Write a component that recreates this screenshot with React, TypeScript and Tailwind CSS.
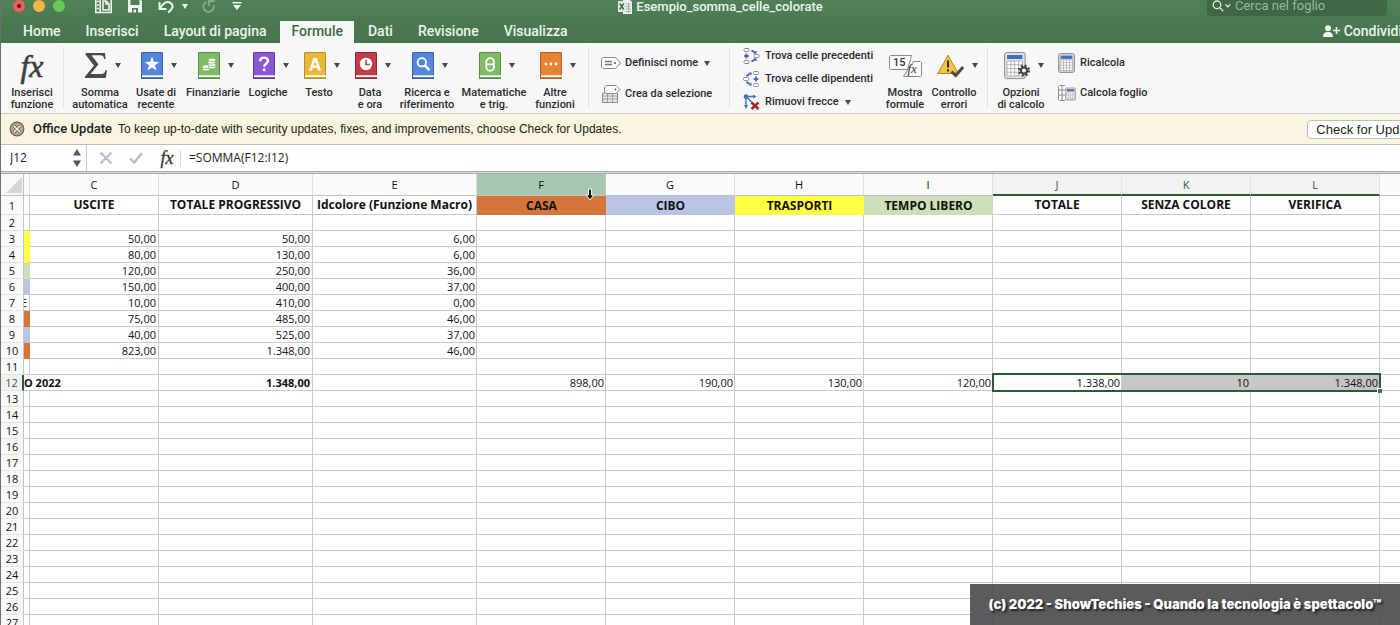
import { useState, type ReactNode } from "react";

const tabs = ["Home", "Inserisci", "Layout di pagina", "Formule", "Dati", "Revisione", "Visualizza"];

type Cell = { text?: string; className?: string };

const columns = [
  { name: "", width: "w-[6px]" },
  { name: "C", width: "w-[129px]" },
  { name: "D", width: "w-[154px]" },
  { name: "E", width: "w-[164px]" },
  { name: "F", width: "w-[129px]" },
  { name: "G", width: "w-[129px]" },
  { name: "H", width: "w-[129px]" },
  { name: "I", width: "w-[129px]" },
  { name: "J", width: "w-[129px]" },
  { name: "K", width: "w-[129px]" },
  { name: "L", width: "w-[129px]" },
  { name: "", width: "" },
];

const titles: Cell[] = [
  {},
  { text: "USCITE" },
  { text: "TOTALE PROGRESSIVO" },
  { text: "Idcolore (Funzione Macro)" },
  { text: "CASA", className: "bg-[#d4763c]" },
  { text: "CIBO", className: "bg-[#bac5e6]" },
  { text: "TRASPORTI", className: "bg-[#ffff43]" },
  { text: "TEMPO LIBERO", className: "bg-[#cbdfb8]" },
  { text: "TOTALE" },
  { text: "SENZA COLORE" },
  { text: "VERIFICA" },
  {},
];

// [colour of column B, uscite, totale progressivo, id colore]
const expenses: Record<number, string[]> = {
  3: ["bg-[#ffff43]", "50,00", "50,00", "6,00"],
  4: ["bg-[#ffff43]", "80,00", "130,00", "6,00"],
  5: ["bg-[#cbdfb8]", "120,00", "250,00", "36,00"],
  6: ["bg-[#bac5e6]", "150,00", "400,00", "37,00"],
  7: ["bg-white", "10,00", "410,00", "0,00"],
  8: ["bg-[#d4763c]", "75,00", "485,00", "46,00"],
  9: ["bg-[#bac5e6]", "40,00", "525,00", "37,00"],
  10: ["bg-[#d4763c]", "823,00", "1.348,00", "46,00"],
};

const totals = ["", "", "1.348,00", "", "898,00", "190,00", "130,00", "120,00", "1.338,00", "10", "1.348,00", ""];

const rowNumbers = Array.from({ length: 26 }, (_, i) => i + 2);

function Arrow({ className = "text-[#4a4a4a]" }: { className?: string }) {
  return (
    <svg viewBox="0 0 6 5" className={`h-[5px] w-[6px] shrink-0 ${className}`} fill="currentColor">
      <path d="M0 0h6L3 5z" />
    </svg>
  );
}

function Book({ fill, edge, children }: { fill: string; edge: string; children: ReactNode }) {
  return (
    <svg viewBox="0 0 22 27" className="h-[27px] w-[22px]">
      <rect x="0.5" y="0.5" width="21" height="26" rx="0.5" fill={fill} stroke={edge} />
      <path d="M1 24.2h21" stroke="#fff" strokeWidth="1.8" />
      <path d="M0 26.2h22" stroke={edge} strokeWidth="1.2" />
      {children}
    </svg>
  );
}

const books = [
  {
    label: ["Usate di", "recente"],
    width: "w-14",
    icon: (
      <Book fill="#5585dc" edge="#3b62a8">
        <path d="M11 4.8l1.9 5 5.300.2-4.200 3.300 1.500 5.200-4.500-3-4.500 3 1.500-5.200-4.200-3.300 5.300-.2z" fill="#fff" />
      </Book>
    ),
  },
  {
    label: ["Finanziarie"],
    width: "w-[58px]",
    icon: (
      <Book fill="#7fba66" edge="#578c42">
        <g fill="#fff" stroke="#7fba66" strokeWidth="0.8">
          <ellipse cx="8" cy="17" rx="3.7" ry="1.9" />
          <ellipse cx="8" cy="14.7" rx="3.7" ry="1.9" />
          <ellipse cx="14" cy="15" rx="3.7" ry="1.9" />
          <ellipse cx="14" cy="12.6" rx="3.7" ry="1.9" />
          <ellipse cx="13.5" cy="10.2" rx="3.7" ry="1.9" />
          <ellipse cx="14" cy="7.8" rx="3.7" ry="1.9" />
        </g>
      </Book>
    ),
  },
  {
    label: ["Logiche"],
    width: "w-[52px]",
    icon: (
      <Book fill="#8c57d0" edge="#633a99">
        <path d="M7.2 9.2c0-4.800 7.800-4.600 7.800-.4 0 2.800-3.800 2.700-3.800 5.900" fill="none" stroke="#fff" strokeWidth="2.4" />
        <circle cx="11.2" cy="17.8" r="1.5" fill="#fff" />
      </Book>
    ),
  },
  {
    label: ["Testo"],
    width: "w-[50px]",
    icon: (
      <Book fill="#e7b93c" edge="#b98f25">
        <path
          d="M9.500 6h3.200l4.400 12.500h-2.900l-.9-2.800H8.800l-.9 2.800H5zM11 9l-1.500 4.600h3.100z"
          fill="#fff"
          fillRule="evenodd"
        />
      </Book>
    ),
  },
  {
    label: ["Data", "e ora"],
    width: "w-[52px]",
    icon: (
      <Book fill="#c33d49" edge="#8d2932">
        <circle cx="11" cy="12" r="6.2" fill="#fff" />
        <path d="M11 8v4.5h3.8" fill="none" stroke="#c33d49" strokeWidth="1.6" />
      </Book>
    ),
  },
  {
    label: ["Ricerca e", "riferimento"],
    width: "w-[62px]",
    icon: (
      <Book fill="#5585dc" edge="#3b62a8">
        <circle cx="9.8" cy="10.3" r="4.2" fill="none" stroke="#fff" strokeWidth="1.8" />
        <path d="M12.8 13.4l4.600 4.8" stroke="#fff" strokeWidth="2.6" />
      </Book>
    ),
  },
  {
    label: ["Matematiche", "e trig."],
    width: "w-[72px]",
    icon: (
      <Book fill="#7fba66" edge="#578c42">
        <rect x="7.3" y="6.2" width="7.6" height="12.6" rx="3.8" fill="none" stroke="#fff" strokeWidth="1.8" />
        <path d="M7.3 12.4h7.6" stroke="#fff" strokeWidth="1.8" />
      </Book>
    ),
  },
  {
    label: ["Altre", "funzioni"],
    width: "w-[50px]",
    icon: (
      <Book fill="#e68334" edge="#b25f1e">
        <g fill="#fff">
          <circle cx="6" cy="12" r="1.4" />
          <circle cx="11" cy="12" r="1.4" />
          <circle cx="16" cy="12" r="1.4" />
        </g>
      </Book>
    ),
  },
];

function BigButton({ label, width, icon, menu }: { label: string[]; width: string; icon: ReactNode; menu?: boolean }) {
  return (
    <button className={`flex shrink-0 flex-col items-center pt-[9px] ${width}`}>
      <span className={`flex h-[27px] items-center gap-2 ${menu ? "pl-1.5" : ""}`}>
        {icon}
        {menu && <Arrow />}
      </span>
      <span className="mt-2 flex flex-col whitespace-nowrap leading-3">
        {label.map((line) => (
          <span key={line}>{line}</span>
        ))}
      </span>
    </button>
  );
}

function SmallButton({ label, icon, menu }: { label: string; icon: ReactNode; menu?: boolean }) {
  return (
    <button className="flex items-center whitespace-nowrap leading-4">
      {icon}
      {label}
      {menu && (
        <span className="ml-1.5">
          <Arrow />
        </span>
      )}
    </button>
  );
}

function Separator() {
  return <div className="mb-1 mt-1 w-px shrink-0 bg-[#e2e2e2]" />;
}

function Calculator({ className }: { className: string }) {
  return (
    <svg viewBox="0 0 17 20" className={className}>
      <rect x="0.6" y="0.6" width="15.8" height="18.8" rx="1.8" fill="#d9d9d9" stroke="#8a8a8a" />
      <rect x="2.6" y="2.6" width="11.8" height="3.2" fill="#3f6fc4" />
      <g fill="#fff" stroke="#8a8a8a" strokeWidth="0.5">
        <path d="M2.6 7h11.8v10.5H2.6zM5.5 7v10.5M8.5 7v10.5M11.5 7v10.5M2.6 9.6h11.8M2.6 12.2h11.8M2.6 14.8h11.8" />
      </g>
    </svg>
  );
}

function TitleBar() {
  return (
    <div className="h-[21px]">
      <div className="flex h-3 items-center text-[13px] font-medium text-[#eef4ee]">
        <div className="flex flex-1 items-center">
          <div className="ml-3 flex gap-2">
            <button aria-label="Chiudi" className="flex size-3 items-center justify-center rounded-full bg-[#ee5f5b]">
              <span className="size-1 rounded-full bg-[#5f1111]" />
            </button>
            <button aria-label="Riduci" className="size-3 rounded-full bg-[#f4b642]" />
            <button aria-label="Ingrandisci" className="size-3 rounded-full bg-[#68c953]" />
          </div>
          <button aria-label="Raccolta" className="ml-[30px]">
            <svg viewBox="0 0 17 16" className="h-4 w-[17px]" fill="none" stroke="currentColor" strokeWidth="1.6">
              <path d="M0.8 0v14.500h15.4V0M5.200 0v14.500M2 3.500h2M2 7h2M2 10.500h2M8 12V3h3l3 3v6zM11 3v3h3" />
            </svg>
          </button>
          <button aria-label="Salva" className="ml-4">
            <svg viewBox="0 0 14 14" className="size-3.5" fill="currentColor">
              <path d="M0 0h12l2 2v11.500H0zM2.500 0v6h9V0zM4 9v4.500h1.500V10.500h2.500v3H10V9z" fillRule="evenodd" />
            </svg>
          </button>
          <button aria-label="Annulla" className="ml-4 flex items-center gap-2">
            <svg viewBox="0 0 16 14" className="h-3.5 w-4" fill="none" stroke="currentColor" strokeWidth="2">
              <path d="M1.5 3v7h7M2 9.600C4.500 4 9 1.600 12.500 3.800S15 10.500 10 13.500" />
            </svg>
            <Arrow className="text-[#eef4ee]" />
          </button>
          <button aria-label="Ripeti" className="ml-3.5 text-[#86a98a]">
            <svg viewBox="0 0 14 14" className="size-3.5" fill="none" stroke="currentColor" strokeWidth="2">
              <path d="M4.500 2.800A5.200 5.200 0 1 0 11.500 6M7 7V2h5.500" />
            </svg>
          </button>
          <button aria-label="Personalizza" className="ml-4">
            <svg viewBox="0 0 10 8" className="h-2 w-2.5" fill="currentColor">
              <path d="M0.500 0h9v1.600h-9zM1 3h8L5 8z" />
            </svg>
          </button>
        </div>
        <div className="flex items-center gap-1 pt-0.5">
          <svg viewBox="0 0 14 14" className="size-3.5">
            <path d="M5 0h7l2 2v12H5z" fill="#eef4ee" />
            <path d="M7 4h6M7 6.500h6M7 9h6M7 11.500h6M10.500 3v10" stroke="#8aa58d" strokeWidth="0.700" />
            <path d="M0 1h7.500v11H0z" fill="#dfe9df" />
            <path d="M1.700 3.500l4 6M5.700 3.500l-4 6" stroke="#3f6b46" strokeWidth="1.500" />
          </svg>
          <h1>Esempio_somma_celle_colorate</h1>
        </div>
        <div className="flex flex-1 justify-end">
          <label className="mr-[53px] flex h-5 w-[180px] items-center rounded-b-sm bg-[#3f6645] pl-[5px]">
            <svg viewBox="0 0 20 12" className="h-3 w-5 shrink-0" fill="none" stroke="#dbe7dc" strokeWidth="1.300">
              <circle cx="5" cy="4.800" r="3.800" />
              <path d="M7.800 7.600l3.400 3.600M13.500 4.500l2.300 2.300 2.300-2.300" />
            </svg>
            <input
              aria-label="Cerca nel foglio"
              placeholder="Cerca nel foglio"
              className="ml-[3px] w-36 bg-transparent font-normal outline-none placeholder:text-[#9cb89f]"
            />
          </label>
        </div>
      </div>
    </div>
  );
}

function Ribbon() {
  return (
    <div className="flex h-[71px] border-b border-[#c9c9cd] bg-[#f7f7f7] text-[11px] font-medium text-[#2b2b2b]">
      <BigButton
        label={["Inserisci", "funzione"]}
        width="w-[62px]"
        icon={
          <span className="font-['Liberation_Serif'] text-[32px] font-normal italic leading-none text-[#3f3f3f] [-webkit-text-stroke:0.6px]">
            fx
          </span>
        }
      />
      <Separator />
      <div className="flex pl-2 pr-2">
        <BigButton
          label={["Somma", "automatica"]}
          width="w-14"
          menu
          icon={
            <svg viewBox="0 0 22 25" className="h-[25px] w-[22px]" fill="#4a4a4a">
              <path d="M0.500 0h19.500l.5 6h-1.300c-.5-2.800-1.500-3.700-4-3.700H6.500l7 9L5.500 21h10.500c3 0 4-1.200 4.700-4h1.300l-1.200 8H0v-1.500l9-10.700L0.500 1.500z" />
            </svg>
          }
        />
        {books.map((b) => (
          <BigButton key={b.label[0]} label={b.label} width={b.width} icon={b.icon} menu />
        ))}
      </div>
      <Separator />
      <div className="flex w-[140px] shrink-0 flex-col gap-3.5 pl-3 pt-3">
        <SmallButton
          label="Definisci nome"
          menu
          icon={
            <svg viewBox="0 0 20 12" className="mr-1 h-3 w-5" fill="#fff" stroke="#8a8a8a">
              <path d="M2 0.500h12.500l5 5.500-5 5.500H2L0.500 10V2z" />
              <path d="M4 4.500h7M4 7.500h7" stroke="#4d79c7" strokeWidth="1.300" />
              <circle cx="14" cy="6" r="1" fill="#555" stroke="none" />
            </svg>
          }
        />
        <SmallButton
          label="Crea da selezione"
          icon={
            <svg viewBox="0 0 20 18" className="mr-1 h-[18px] w-5" fill="#fff" stroke="#8a8a8a">
              <path d="M1.500 8h15v9.500h-15z" fill="#dbe6f6" />
              <path d="M1.500 11h15M1.500 14h15M6.500 8v9.500M11.500 8v9.500" strokeWidth="0.700" />
              <path d="M5 0.500h10l4 4-4 4H5L3.500 7V2z" />
              <circle cx="14.500" cy="4.500" r="0.900" fill="#555" stroke="none" />
            </svg>
          }
        />
      </div>
      <Separator />
      <div className="flex w-[153px] shrink-0 flex-col gap-[7px] pl-[13px] pt-[5px]">
        <SmallButton
          label="Trova celle precedenti"
          icon={
            <svg viewBox="0 0 17 16" className="mr-[5px] h-4 w-[17px]" fill="#fff" stroke="#8a8a8a">
              <rect x="1" y="0.500" width="5" height="3" rx="1" />
              <rect x="1" y="12.500" width="5" height="3" rx="1" />
              <rect x="11" y="6.500" width="5" height="3" rx="1" />
              <path d="M3.500 5.500v5M1 8h5M8.500 2.500l3.500 2M8.500 13.500l3.500-2" stroke="#2f5fb3" strokeWidth="1.700" />
              <path d="M10.500 5.500h3v-3zM10.500 10.500h3v3z" fill="#2f5fb3" stroke="none" />
            </svg>
          }
        />
        <SmallButton
          label="Trova celle dipendenti"
          icon={
            <svg viewBox="0 0 17 16" className="mr-[5px] h-4 w-[17px]" fill="#fff" stroke="#8a8a8a">
              <rect x="10.500" y="0.500" width="5" height="3" rx="1" />
              <rect x="10.500" y="12.500" width="5" height="3" rx="1" />
              <rect x="0.500" y="6.500" width="5" height="3" rx="1" />
              <path d="M13 5.500v5M10.500 8h5M3.500 5l3-2M3.500 11l3 2" stroke="#2f5fb3" strokeWidth="1.700" />
              <path d="M5.500 1.500h3v3zM5.500 14.500h3v-3z" fill="#2f5fb3" stroke="none" />
            </svg>
          }
        />
        <SmallButton
          label="Rimuovi frecce"
          menu
          icon={
            <svg viewBox="0 0 17 16" className="mr-[5px] h-4 w-[17px]" fill="none" stroke="#3f6fb5">
              <path d="M3 2.500h8M3 2.500v9M3.500 3l6 6" strokeWidth="1.300" />
              <path d="M10 0.500l3.500 2-3.500 2zM1 11h4l-2 4z" fill="#3f6fb5" stroke="none" />
              <circle cx="3" cy="2.500" r="2.300" fill="#3f6fb5" stroke="none" />
              <path d="M8.500 8.500l7 6.500M15.500 8.500l-7 6.500" stroke="#a3262e" strokeWidth="2.400" />
            </svg>
          }
        />
      </div>
      <BigButton
        label={["Mostra", "formule"]}
        width="w-11"
        icon={
          <svg viewBox="0 0 33 24" className="h-6 w-[33px] shrink-0" fill="#fafafa" stroke="#8a8a8a">
            <path d="M1.500 1.500h21l-4 14h-17l-1-1v-12zM24.500 7.500h7l1 1v13l-1 1h-17z" />
            <text x="4" y="12" fontSize="11" fill="#333" stroke="none">15</text>
            <text x="18.500" y="19" fontSize="13" fontStyle="italic" fill="#333" stroke="none" className="font-['Liberation_Serif']">
              fx
            </text>
          </svg>
        }
      />
      <BigButton
        label={["Controllo", "errori"]}
        width="w-[54px]"
        menu
        icon={
          <svg viewBox="0 0 27 24" className="h-6 w-[27px]">
            <path d="M11 1.200L21.300 19.500H0.800z" fill="#f3c33f" stroke="#b58a1c" strokeLinejoin="round" />
            <path d="M11 6.500v7M11 15.200v2.300" stroke="#333" strokeWidth="2" />
            <path d="M14.500 17.500l4.200 4 7.500-8.500" fill="none" stroke="#484848" strokeWidth="3" />
          </svg>
        }
      />
      <div className="w-1.5 shrink-0" />
      <Separator />
      <BigButton
        label={["Opzioni", "di calcolo"]}
        width="w-[66px]"
        menu
        icon={
          <svg viewBox="0 0 26 28" className="h-7 w-[26px]">
            <rect x="0.600" y="0.600" width="20.500" height="26" rx="2" fill="#e4e4e4" stroke="#8a8a8a" />
            <rect x="3" y="3" width="15.500" height="4" fill="#3f6fc4" />
            <path
              d="M3 9h15.500v15H3zM6.900 9v15M10.700 9v15M14.600 9v15M3 12.700h15.500M3 16.500h15.500M3 20.200h15.500"
              fill="#fff"
              stroke="#999"
              strokeWidth="0.700"
            />
            <circle cx="20" cy="18.500" r="5" fill="none" stroke="#444" strokeWidth="2.200" strokeDasharray="2 1.930" />
            <circle cx="20" cy="18.500" r="3.200" fill="#f0f0f0" stroke="#444" strokeWidth="2.200" />
          </svg>
        }
      />
      <div className="flex flex-col gap-3 pl-1 pt-2.5">
        <SmallButton label="Ricalcola" icon={<Calculator className="mr-[5px] h-5 w-[17px]" />} />
        <SmallButton
          label="Calcola foglio"
          icon={
            <span className="mr-1 flex items-start">
              <svg viewBox="0 0 7 16" className="h-4 w-[7px]" fill="#fff" stroke="#8a8a8a">
                <path d="M7 0.500H1.500l-1 1v13l1 1H7M0.500 5H7M0.500 10H7M4 0.500v15" />
              </svg>
              <Calculator className="mt-0.5 h-3.5 w-[11px]" />
            </span>
          }
        />
      </div>
    </div>
  );
}

function UpdateBar() {
  return (
    <div className="flex h-[31px] items-center border-b border-[#c0c0b0] bg-[#f8f4df] pl-2 pr-[7px] text-[13px] text-[#1c1c1c]">
      <button aria-label="Chiudi avviso">
        <svg viewBox="0 0 16 16" className="size-4">
          <circle cx="8" cy="8" r="6.800" fill="#b8a98c" stroke="#6e5f47" strokeWidth="1.200" />
          <path d="M5 5l6 6M11 5l-6 6" stroke="#5b4c36" strokeWidth="3" />
          <path d="M5 5l6 6M11 5l-6 6" stroke="#fff" strokeWidth="1.500" />
        </svg>
      </button>
      <span className="ml-2 font-medium">Office Update</span>
      <span className="ml-1.5 font-['Liberation_Sans',sans-serif] text-xs">
        To keep up-to-date with security updates, fixes, and improvements, choose Check for Updates.
      </span>
      <button className="ml-auto h-[19px] rounded-sm border border-[#bcbcc4] bg-white px-2 font-['Liberation_Sans',sans-serif] leading-none">
        Check for Updates
      </button>
    </div>
  );
}

function FormulaBar({ formula, onChange }: { formula: string; onChange: (v: string) => void }) {
  return (
    <div className="flex h-[26px] items-center bg-white font-['Open_Sans',sans-serif] text-xs text-[#222]">
      <input aria-label="Casella nome" defaultValue="J12" className="w-14 pl-[9px] outline-none" />
      <svg viewBox="0 0 8 18" className="ml-4 h-[18px] w-2" fill="#555">
        <path d="M4 0l4 6.500H0zM4 18l4-6.500H0z" />
      </svg>
      <div className="ml-[5px] h-full w-px bg-[#cfcfcf]" />
      <button aria-label="Annulla" className="ml-3">
        <svg viewBox="0 0 14 14" className="size-3.5" stroke="#bdbdbd" strokeWidth="2.200">
          <path d="M1.500 1.500l11 11M12.500 1.500l-11 11" />
        </svg>
      </button>
      <button aria-label="Conferma" className="ml-4">
        <svg viewBox="0 0 14 12" className="h-3 w-3.5" fill="none" stroke="#bdbdbd" strokeWidth="2.400">
          <path d="M1 6.500l4.200 4L13 1" />
        </svg>
      </button>
      <button className="ml-4 w-4 font-['Liberation_Serif'] text-lg italic leading-none text-[#333] [-webkit-text-stroke:0.3px]">fx</button>
      <div className="ml-[5px] h-4 w-px bg-[#d6d6d6]" />
      <input
        aria-label="Formula"
        value={formula}
        onChange={(e) => onChange(e.target.value)}
        className="ml-2 flex-1 outline-none"
      />
    </div>
  );
}

function Sheet() {
  const grid = "border-b border-r border-[#cacaca]";

  return (
    <table className="w-full table-fixed border-separate border-spacing-0 bg-white font-['Open_Sans',sans-serif] text-[11px] leading-[15px] text-[#111]">
      <colgroup>
        <col className="w-[23px]" />
        {columns.map((c, i) => (
          <col key={i} className={c.width} />
        ))}
      </colgroup>
      <thead>
        <tr className="h-[22px]">
          <th className="border-b border-r border-[#c2c2c2] bg-[#f8f8f8] p-0">
            <svg viewBox="0 0 16 16" className="ml-[5px] size-4" fill="#d6d6d6">
              <path d="M16 0v16H0z" />
            </svg>
          </th>
          {columns.map((c, i) => {
            const selected = i >= 8 && i <= 10;
            return (
              <th
                key={i}
                className={`relative border-r p-0 font-normal ${
                  selected
                    ? "border-b-2 border-b-[#2f5a36] border-r-[#e2e2e2] bg-[#f2f2f2] text-[#2f5a36]"
                    : c.name === "F"
                      ? "border-b border-[#c2c2c2] bg-[#a5c8b0]"
                      : "border-b border-b-[#c2c2c2] border-r-[#dedede] bg-[#fafafa]"
                }`}
              >
                {c.name}
                {c.name === "F" && (
                  <svg viewBox="0 0 10 13" className="absolute -bottom-1.5 right-2.5 z-10 h-[13px] w-2.5">
                    <path d="M3.500 1h3v6h2.300L5 12 1.200 7h2.300z" fill="#111" stroke="#fff" strokeWidth="1" />
                  </svg>
                )}
              </th>
            );
          })}
        </tr>
      </thead>
      <tbody>
        <tr className="h-[19px]">
          <th className="border-b border-r border-b-[#e4e4e4] border-r-[#c2c2c2] bg-[#fafafa] p-0 font-normal">1</th>
          {titles.map((t, i) => (
            <td
              key={i}
              className={`overflow-hidden whitespace-nowrap p-0 text-center text-xs font-bold leading-[18px] ${t.className ?? grid}`}
            >
              {t.text}
            </td>
          ))}
        </tr>
        {rowNumbers.map((n) => {
          const expense = expenses[n];
          const active = n === 12;
          return (
            <tr key={n} className="h-4">
              <th
                className={`border-b border-b-[#e4e4e4] p-0 font-normal ${
                  active ? "border-r-2 border-r-[#2f5a36] bg-[#f2f2f2] text-[#2f5a36]" : "border-r border-r-[#c2c2c2] bg-[#fafafa]"
                }`}
              >
                {n}
              </th>
              {columns.map((c, i) => {
                if (i === 0) {
                  return (
                    <td key={i} className={`p-0 ${active ? "border-b border-[#cacaca]" : expense && n !== 7 ? expense[0] : grid}`}>
                      {n === 7 && <div className="flex w-[3px] justify-end overflow-hidden">E</div>}
                      {active && <div className="w-0 whitespace-nowrap font-bold">O 2022</div>}
                    </td>
                  );
                }
                const text = active ? totals[i] : i < 4 && expense ? expense[i] : "";
                return (
                  <td
                    key={i}
                    className={`relative whitespace-nowrap py-0 pl-0 text-right ${i < 3 ? "pr-0.5" : "pr-px"} ${grid} ${
                      active && i === 2 ? "font-bold" : ""
                    } ${active && (i === 9 || i === 10) ? "bg-[#c6c6c6]" : ""}`}
                  >
                    {text}
                    {active && c.name === "J" && (
                      <div className="absolute -left-px -top-0.5 z-10 h-[19px] w-[389px] border-2 border-[#2f5a36]">
                        <span className="absolute -bottom-[3px] -right-[3px] size-[5px] border-l border-t border-white bg-[#3f7a48]" />
                      </div>
                    )}
                  </td>
                );
              })}
            </tr>
          );
        })}
      </tbody>
    </table>
  );
}

export default function App() {
  const [tab, setTab] = useState("Formule");
  const [formula, setFormula] = useState("=SOMMA(F12:I12)");

  return (
    <div className="relative h-screen overflow-hidden bg-white font-['Roboto',sans-serif]">
      <div className="w-[calc(100%+40px)] border-l border-[#6f6f6f]">
        <header className="bg-linear-to-b from-[#4f8057] to-[#47744d]">
          <TitleBar />
          <nav className="flex h-[22px] items-stretch gap-[3px] pl-[11px] text-sm font-medium text-[#eef4ee]">
            {tabs.map((t) => (
              <button
                key={t}
                onClick={() => setTab(t)}
                className={`px-[11px] pb-0.5 leading-5 ${tab === t ? "bg-[#f7f7f7] text-[#3d6b45]" : ""}`}
              >
                {t}
              </button>
            ))}
            <button className="ml-auto flex items-center gap-1 pb-0.5 pr-[38px] leading-5">
              <svg viewBox="0 0 17 12" className="h-3 w-[17px]" fill="currentColor">
                <circle cx="5" cy="3.200" r="3" />
                <path d="M0 12c0-3.500 1.500-5 5-5s5 1.500 5 5zM12.700 2h1.600v2.700H17v1.600h-2.700V9h-1.600V6.300H10V4.700h2.700z" />
              </svg>
              Condividi
            </button>
          </nav>
        </header>
        <Ribbon />
        <UpdateBar />
        <FormulaBar formula={formula} onChange={setFormula} />
        <div className="h-[3px] border-y border-[#a8a8a8] bg-[#dcdcdc]" />
        <Sheet />
      </div>
      <footer className="absolute bottom-0 right-0 flex h-[41px] w-[430px] items-center justify-center bg-[#4a4a4a]/90 font-['Inter',sans-serif] text-[13px] font-black text-white [text-shadow:2px_2px_2px_#222]">
        (c) 2022 - ShowTechies - Quando la tecnologia è spettacolo™
      </footer>
    </div>
  );
}
